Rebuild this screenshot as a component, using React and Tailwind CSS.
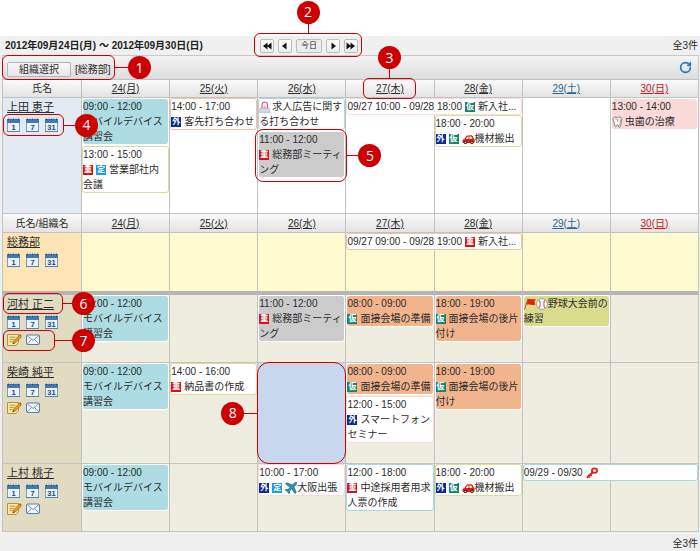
import { RotateCw } from "lucide-react"

const callouts = {
  1: { box: "-top-px -bottom-px -left-px w-[113px] rounded-md", side: "right", line: "w-3.5" },
  2: { box: "-top-[6px] -bottom-[4px] -left-[6px] -right-[4px] rounded-md", side: "top", line: "h-2.5" },
  3: { box: "-inset-y-[2px] left-[17px] right-[18px] rounded-md", side: "top", line: "h-2.5" },
  4: { box: "-top-[3px] -bottom-[4px] left-0 w-[61px] rounded-md", side: "right", line: "w-3" },
  5: { box: "-top-[3px] -bottom-[5px] -left-[4px] -right-[3px] rounded-lg", side: "right", line: "w-3" },
  6: { box: "-top-[4px] -bottom-[2px] left-0 w-[60px] rounded-md", side: "right", line: "w-2.5" },
  7: { box: "-top-[3px] -bottom-[5px] left-0 w-[52px] rounded-md", side: "right", line: "w-[18px]" },
  8: { box: "-inset-px rounded-xl", side: "left", line: "w-3.5" },
}

const sides = {
  right: "left-full inset-y-0 flex items-center",
  left: "right-full inset-y-0 flex flex-row-reverse items-center",
  top: "bottom-full inset-x-0 flex flex-col-reverse items-center",
}

const Callout = ({ n }) => {
  const { box, side, line } = callouts[n]
  return (
    <div className={`absolute z-10 pointer-events-none border border-[#cc0000] ${box}`}>
      <div className={`absolute ${sides[side]}`}>
        <span className={`shrink-0 bg-[#cc0000] ${side === "top" ? "w-px" : "h-px"} ${line}`} />
        <span className="shrink-0 flex items-center justify-center size-[23px] rounded-full bg-[#cc0000] text-white text-[14px] leading-none font-normal font-['Open_Sans',sans-serif]">
          {n}
        </span>
      </div>
    </div>
  )
}

const tags = {
  外: "bg-[#0b2c96]",
  重: "bg-[#d3141c]",
  仮: "bg-[#16836f]",
  定: "bg-[#1e9be8]",
}

const Tag = ({ name }) => (
  <span
    className={`inline-block overflow-hidden align-[-2px] size-2.5 mr-[3px] text-center text-[8px] leading-[10px] font-bold text-white ${tags[name]}`}
  >
    {name}
  </span>
)

const pictures = {
  siren: (
    <svg viewBox="0 0 13 12" className="inline-block align-[-3px] w-[13px] h-3" fill="none">
      <path d="M3 7.5V4.2C3 2.2 4 1 5.7 1s2.8 1.2 2.8 3v3.5" stroke="#e0567a" strokeWidth="1.2" />
      <path d="M4.6 5.6c.5-1.3 1.7-1.3 2.2 0v1.9H4.6z" fill="#f4a4b8" />
      <path d="M1.2 7.5H10l1.2 3.8H.4z" fill="#d9dde8" stroke="#a3aabb" strokeWidth=".7" />
    </svg>
  ),
  car: (
    <svg viewBox="0 0 13 12" className="inline-block align-[-3px] w-[13px] h-3">
      <path
        d="M.4 8.8C.2 7.3.8 6.5 2.2 6.2L4 3.4c.4-.7.9-1 1.6-1l3.400-.2c.8 0 1.200.2 1.600.9l1.200 2.300c.8.500 1 1.500.8 3.700l-.8.900H1.200z"
        fill="#e3190f"
      />
      <path d="m3.700 6.100 1.300-2c.2-.3.400-.4.700-.4h.8v2.300zM7.400 3.600h1.400c.3 0 .5.100.7.400l.9 1.800-3 .1z" fill="#fff" />
      <circle cx="3.4" cy="9.5" r="1.7" fill="#3a2a2a" />
      <circle cx="10" cy="9.5" r="1.7" fill="#3a2a2a" />
      <circle cx="3.4" cy="9.5" r=".7" fill="#ddd" />
      <circle cx="10" cy="9.5" r=".7" fill="#ddd" />
    </svg>
  ),
  plane: (
    <svg viewBox="0 0 12 12" className="inline-block align-[-3px] size-3">
      <path
        d="M11.6.5c-.7-.5-1.7 0-2.5.8L7.4 3 1.6.8.5 1.8l4.6 3.4L3 7.6 1 7.3l-.8.8 2.3 1.4 1.4 2.3.8-.8-.3-2 2.3-2 3.400 4.500 1.100-1L9 4.800l1.700-1.700c.8-.8 1.400-1.900.9-2.600z"
        fill="#2796b8"
        stroke="#14506a"
        strokeWidth=".6"
      />
    </svg>
  ),
  tooth: (
    <svg viewBox="0 0 13 12" className="inline-block align-[-3px] w-[13px] h-3">
      <path
        d="M1 3.200C1 1.400 2.500.7 4 1.200c1 .3 1.800.3 2.700 0C8.400.700 9.900 1.500 9.900 3.400c0 1.600-.7 2.500-.9 4.200-.2 1.800-.5 3.900-1.600 3.900S6.300 8.500 5.500 8.500s-.9 2.300-1.700 2.300C2.500 10.800 2.400 7.800 2 6.300 1.700 5.200 1 4.500 1 3.200z"
        fill="#f6f6f2"
        stroke="#6f6f6f"
        strokeWidth=".8"
      />
      <path d="M8 2.500c.8 1.500.4 4-.3 7.500M3 3.500c.6-.6 1.500-.6 2 0M5.600 3v3" fill="none" stroke="#999" strokeWidth=".9" />
    </svg>
  ),
  flag: (
    <svg viewBox="0 0 12 12" className="inline-block align-[-3px] size-3">
      <path d="M3.800.5.600 11.700" stroke="#6f6a52" strokeWidth=".9" />
      <path d="M4 1.200c2-1 3.300.9 7.700-.3l-1.300 3 1 2.800C8 7.800 6 5.600 2.400 6.800z" fill="#e8200c" />
    </svg>
  ),
  ball: (
    <svg viewBox="0 0 12 12" className="inline-block align-[-3px] size-3">
      <circle cx="6" cy="6" r="5.4" fill="#fff" stroke="#8d8d8d" strokeWidth=".8" />
      <path d="M3 1.900c1.600 2.500 1.600 5.700 0 8.200M9 1.900c-1.600 2.500-1.600 5.700 0 8.200" fill="none" stroke="#c33" strokeWidth=".8" />
      <path d="m3.200 4.200 1.600-.6M3.200 7.800l1.600.6M8.800 4.200l-1.600-.6M8.800 7.800l-1.600.6" stroke="#c33" strokeWidth=".5" />
    </svg>
  ),
  key: (
    <svg viewBox="0 0 12 12" className="inline-block align-[-3px] size-3" fill="none" stroke="#e8200c">
      <ellipse cx="8.5" cy="3.6" rx="2.6" ry="2.3" strokeWidth="1.8" />
      <path d="M6.600 5.400.800 10.800" strokeWidth="2" />
      <path d="m2.200 8 2 2.600M4 6.800l1.800 2.100" strokeWidth="1.4" />
    </svg>
  ),
}

const colors = {
  teal: "border-white bg-[#addce2]",
  gray: "border-white bg-[#cbcbcb]",
  orange: "border-white bg-[#f2b48d]",
  pink: "border-white bg-[#fad9d9]",
  olive: "border-white bg-[#d9dc8c]",
  orangeLine: "border-[#f3c3a5] bg-white",
  yellowLine: "border-[#dddca0] bg-white",
  tealLine: "border-[#a9d8df] bg-white",
  pinkLine: "border-[#fadada] bg-white",
}

const Event = ({ time, items = [], title, color, banner, callout }) => (
  <div className={`relative rounded-[3px] border bg-clip-padding ${colors[color]} ${banner ? "truncate" : ""}`}>
    {time && <span className={banner ? "mr-[3px]" : "block"}>{time}</span>}
    {items.map((item) => (tags[item] ? <Tag key={item} name={item} /> : <span key={item}>{pictures[item]}</span>))}
    {title}
    {callout && <Callout n={callout} />}
  </div>
)

const training = { time: "09:00 - 12:00", title: "モバイルデバイス講習会", color: "teal" }
const meeting = { time: "11:00 - 12:00", items: ["重"], title: "総務部ミーティング", color: "gray" }
const setup = { time: "08:00 - 09:00", items: ["仮"], title: "面接会場の準備", color: "orange" }
const cleanup = { time: "18:00 - 19:00", items: ["仮"], title: "面接会場の後片付け", color: "orange" }
const carryOut = { time: "18:00 - 20:00", items: ["外", "仮", "car"], title: "機材搬出", color: "yellowLine" }

// days run from Monday (0) to Sunday (6)
const me = {
  name: "上田 恵子",
  nameBg: "bg-[#e4eaf2]",
  bg: "bg-white",
  iconCallout: 4,
  restHeight: "h-[98px]",
  banner: {
    start: 3,
    event: { time: "09/27 10:00 - 09/28 18:00", items: ["仮"], title: "新入社...", color: "pinkLine" },
  },
  days: {
    0: [training, { time: "13:00 - 15:00", items: ["重", "定"], title: "営業部社内会議", color: "yellowLine" }],
    1: [{ time: "14:00 - 17:00", items: ["外"], title: "客先打ち合わせ", color: "orangeLine" }],
    2: [{ items: ["siren"], title: "求人広告に関する打ち合わせ", color: "tealLine" }, { ...meeting, callout: 5 }],
    4: [carryOut],
    6: [{ time: "13:00 - 14:00", items: ["tooth"], title: "虫歯の治療", color: "pink" }],
  },
}

const members = [
  {
    name: "総務部",
    nameBg: "bg-[#fde5b5]",
    bg: "bg-[#fffbd0]",
    restHeight: "h-[41px]",
    banner: {
      start: 3,
      event: { time: "09/27 09:00 - 09/28 19:00", items: ["重"], title: "新入社...", color: "orangeLine" },
    },
    days: {},
  },
  {
    name: "河村 正二",
    nameBg: "bg-[#e1dcc1]",
    bg: "bg-[#efede0]",
    nameCallout: 6,
    contactCallout: 7,
    contact: true,
    divider: true,
    height: "h-[71px]",
    days: {
      0: [training],
      2: [meeting],
      3: [setup],
      4: [cleanup],
      5: [{ items: ["flag", "ball"], title: "野球大会前の練習", color: "olive" }],
    },
  },
  {
    name: "柴崎 純平",
    nameBg: "bg-[#e1dcc1]",
    bg: "bg-[#efede0]",
    contact: true,
    height: "h-[101px]",
    selected: 2,
    days: {
      0: [training],
      1: [{ time: "14:00 - 16:00", items: ["重"], title: "納品書の作成", color: "yellowLine" }],
      3: [setup, { time: "12:00 - 15:00", items: ["外"], title: "スマートフォンセミナー", color: "pinkLine" }],
      4: [cleanup],
    },
  },
  {
    name: "上村 桃子",
    nameBg: "bg-[#e1dcc1]",
    bg: "bg-[#efede0]",
    contact: true,
    restHeight: "h-[50px]",
    banner: { start: 5, event: { time: "09/29 - 09/30", items: ["key"], color: "tealLine" } },
    days: {
      0: [training],
      2: [{ time: "10:00 - 17:00", items: ["外", "定", "plane"], title: "大阪出張", color: "pinkLine" }],
      3: [{ time: "12:00 - 18:00", items: ["重"], title: "中途採用者用求人票の作成", color: "tealLine" }],
      4: [carryOut],
    },
  },
]

const week = [
  { label: "24(月)" },
  { label: "25(火)" },
  { label: "26(水)" },
  { label: "27(木)" },
  { label: "28(金)" },
  { label: "29(土)", color: "text-[#2a6496]" },
  { label: "30(日)", color: "text-[#c4161c]" },
]

const CalendarIcon = ({ label }) => (
  <svg viewBox="0 0 13 15" className="w-[13px] h-[15px]">
    <path d="M.5 2.5h12v12H.5z" fill="#eaf2fa" stroke="#7d9dc0" />
    <path d="M0 2h13v4H0z" fill="#3f78bb" />
    <path d="M1.5.5v3M4 .5v3M6.5.5v3M9 .5v3M11.5.5v3" stroke="#a9b4c0" strokeWidth="1" />
    <path d="M1.5 2v1.5M4 2v1.5M6.5 2v1.5M9 2v1.5M11.5 2v1.5" stroke="#20446f" strokeWidth="1" />
    <path d="M0 14.5h13" stroke="#5580b0" />
    <text x="6.5" y="12.8" textAnchor="middle" fontSize="7.5" fontWeight="bold" fill="#1c4677">
      {label}
    </text>
  </svg>
)

const NoteIcon = () => (
  <svg viewBox="0 0 15 13" className="w-[15px] h-[13px]">
    <path d="M.5 1.5h11v8L9 12.500H.5z" fill="#fde9a0" stroke="#a98a3c" strokeWidth=".9" />
    <path d="M2.500 4.200h6M2.500 6.400h4.500M2.500 8.600h3" stroke="#a88e4d" strokeWidth=".9" />
    <path d="m5.800 10.800.7-2.500 6-6.200 1.800 1.700-6 6.200z" fill="#f39a1d" stroke="#8a5a14" strokeWidth=".7" />
    <path d="m12.200 2.200 1-1 1.500 1.500-.8.900z" fill="#d8433a" />
    <path d="m5.800 10.800.4-1.300.9.900z" fill="#333" />
  </svg>
)

const MailIcon = () => (
  <svg viewBox="0 0 14 13" className="w-[14px] h-[13px]" fill="none" stroke="#5b7fa6">
    <rect x=".5" y="2" width="13" height="9.5" rx="1" fill="#edf4fb" />
    <path d="m1 2.500 6 5 6-5M1 11l4.500-4.500M13 11 8.500 6.500" strokeWidth=".8" />
  </svg>
)

const NameCell = ({ row }) => (
  <th
    scope="row"
    rowSpan={row.banner ? 2 : 1}
    className={`border-l border-t border-[#c2c2c2] p-0 pt-[2px] text-left align-top font-normal ${row.nameBg} ${row.divider ? "border-t-4 border-t-[#b5b5b5]" : ""}`}
  >
    <div className="relative pl-1 text-[11px] leading-[15px]">
      <a href="#" className="underline">{row.name}</a>
      {row.nameCallout && <Callout n={row.nameCallout} />}
    </div>
    <div className="relative mt-[2px] pl-1 flex gap-1.5">
      <a href="#" aria-label="日表示"><CalendarIcon label="1" /></a>
      <a href="#" aria-label="週表示"><CalendarIcon label="7" /></a>
      <a href="#" aria-label="月表示"><CalendarIcon label="31" /></a>
      {row.iconCallout && <Callout n={row.iconCallout} />}
    </div>
    {row.contact && (
      <div className="relative mt-1 pl-1 flex gap-1">
        <a href="#" aria-label="メモ"><NoteIcon /></a>
        <a href="#" aria-label="メール"><MailIcon /></a>
        {row.contactCallout && <Callout n={row.contactCallout} />}
      </div>
    )}
  </th>
)

const DayCell = ({ row, day, rowSpan = 1, top = true }) => (
  <td
    rowSpan={rowSpan}
    className={`relative border-l border-[#c2c2c2] p-0 align-top ${top ? "border-t" : ""} ${
      row.selected === day ? "bg-[#c9d7ee]" : row.bg
    } ${row.divider ? "border-t-4 border-t-[#b5b5b5]" : ""}`}
  >
    <div className="flex flex-col gap-px">
      {(row.days[day] || []).map((event, i) => (
        <Event key={i} {...event} />
      ))}
    </div>
    {row.selected === day && <Callout n={8} />}
  </td>
)

const ScheduleRow = ({ row }) => {
  const days = [0, 1, 2, 3, 4, 5, 6]

  if (!row.banner) {
    return (
      <tr className={row.height}>
        <NameCell row={row} />
        {days.map((day) => (
          <DayCell key={day} row={row} day={day} />
        ))}
      </tr>
    )
  }

  const { start, event } = row.banner
  return (
    <>
      <tr className="h-[18px]">
        <NameCell row={row} />
        {days.map((day) => {
          if (day === start) {
            return (
              <td key={day} colSpan={2} className={`border-l border-t border-[#c2c2c2] p-0 align-top ${row.bg}`}>
                <Event {...event} banner />
              </td>
            )
          }
          return day === start + 1 ? null : <DayCell key={day} row={row} day={day} rowSpan={2} />
        })}
      </tr>
      <tr className={row.restHeight}>
        <DayCell row={row} day={start} top={false} />
        <DayCell row={row} day={start + 1} top={false} />
      </tr>
    </>
  )
}

const HeaderRow = ({ title, callout, height }) => (
  <tr className={height}>
    <th scope="col" className="border-l border-t border-[#c2c2c2] p-0 font-normal bg-linear-to-b from-[#fafafa] to-[#e3e3e3]">
      {title}
    </th>
    {week.map((day, i) => (
      <th
        key={day.label}
        scope="col"
        className="relative border-l border-t border-[#c2c2c2] p-0 font-normal bg-linear-to-b from-[#fafafa] to-[#e3e3e3]"
      >
        <a href="#" className={`underline ${day.color || ""}`}>{day.label}</a>
        {callout && i === 3 && <Callout n={callout} />}
      </th>
    ))}
  </tr>
)

const arrows = {
  first: "M6.5 1.5v7L2 5zM10.5 1.5v7L6 5z",
  prev: "M7.5 1.5v7L3 5z",
  next: "M4.5 1.5v7L9 5z",
  last: "M1.5 1.5v7L6 5zM5.5 1.5v7L10 5z",
}

const NavButton = ({ label, arrow }) => (
  <button
    type="button"
    aria-label={label}
    className="flex items-center justify-center size-3.5 rounded-[2px] border border-[#bdbdbd] bg-linear-to-b from-white to-[#ececec]"
  >
    <svg viewBox="0 0 12 10" className="w-3 h-2.5 shrink-0" fill="#111">
      <path d={arrows[arrow]} />
    </svg>
  </button>
)

const App = () => (
  <div className="min-h-screen bg-[#f0f0f0] text-[10px] leading-[15px] text-[#2b2b2b] font-['Liberation_Sans','Noto_Sans_CJK_JP',sans-serif]">
    <div className="h-9 bg-white" />

    <div className="grid grid-cols-[255px_1fr_auto] items-center h-[19px] pl-[5px] pr-[2px]">
      <h1 className="font-bold text-[#222]">2012年09月24日(月) ～ 2012年09月30日(日)</h1>
      <nav className="relative justify-self-start flex gap-1">
        <NavButton label="前の週" arrow="first" />
        <NavButton label="前の日" arrow="prev" />
        <button
          type="button"
          className="w-[26px] h-3.5 rounded-[2px] border border-[#bdbdbd] bg-[#ececec] text-[8px] leading-none"
        >
          今日
        </button>
        <NavButton label="次の日" arrow="next" />
        <NavButton label="次の週" arrow="last" />
        <Callout n={2} />
      </nav>
      <span>全3件</span>
    </div>

    <div className="pl-[2px] pr-px">
      <div className="relative flex items-center gap-1 h-6 pl-1 pr-1.5 pt-1 border border-b-0 border-[#c9c9c9] bg-linear-to-b from-[#f4f4f4] to-[#dcdcdc]">
        <button
          type="button"
          className="w-16 h-[15px] rounded-[2px] border border-[#b5b5b5] bg-linear-to-b from-[#f8f8f8] to-[#e6e6e6] leading-none"
        >
          組織選択
        </button>
        <span>[総務部]</span>
        <button type="button" aria-label="更新" className="ml-auto mb-1 text-[#2a74b8]">
          <RotateCw size={13} strokeWidth={3} />
        </button>
        <Callout n={1} />
      </div>

      <table className="w-full table-fixed border-separate border-spacing-0 border-r border-b border-[#c2c2c2]">
        <colgroup>
          <col className="w-[79px]" />
          <col span={7} />
        </colgroup>
        <tbody>
          <HeaderRow title="氏名" callout={3} height="h-[18px]" />
          <ScheduleRow row={me} />
          <HeaderRow title="氏名/組織名" height="h-[19px]" />
          {members.map((row) => (
            <ScheduleRow key={row.name} row={row} />
          ))}
        </tbody>
      </table>
    </div>

    <p className="pt-1 pr-[2px] text-right">全3件</p>
  </div>
)

export default App
